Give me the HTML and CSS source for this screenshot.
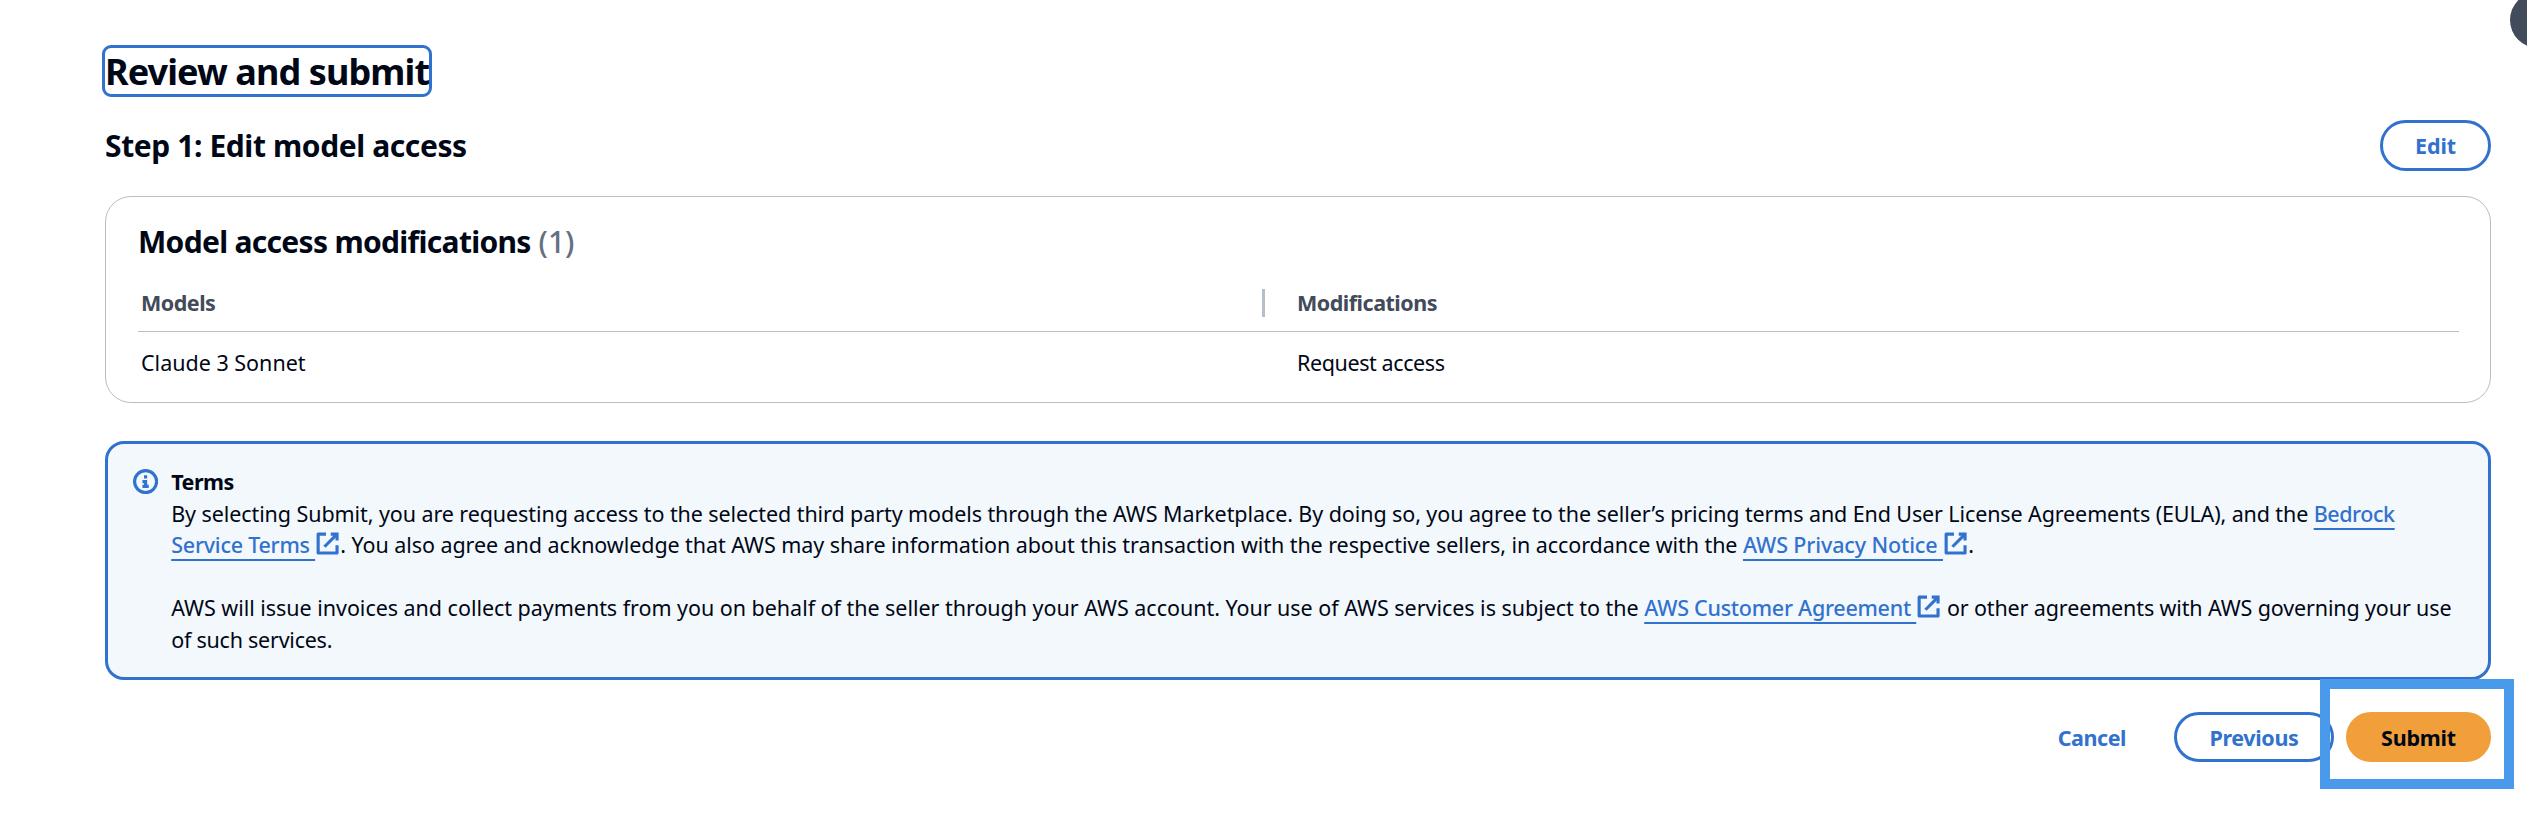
FILE: index.html
```html
<!DOCTYPE html>
<html lang="en">
<head>
<meta charset="utf-8">
<title>Review and submit</title>
<link rel="stylesheet" href="styles.css">
</head>
<body>
<svg class="sprite" aria-hidden="true">
  <symbol id="external" viewBox="0 0 16 16">
    <path d="M10 2h4v4" /><path d="m6 10 8-8" /><path d="M14 9.048V14H2V2h5" stroke-linejoin="round" />
  </symbol>
</svg>
<div class="help-toggle"></div>
<main class="page">
  <h1 class="title">Review and submit</h1>
  <section class="step-header">
    <h2 class="step-title">Step 1: Edit model access</h2>
    <button class="btn btn-edit">Edit</button>
  </section>
  <section class="card">
    <h2 class="card-title"><span class="card-name">Model access modifications</span> <span class="count">(1)</span></h2>
    <div class="table">
      <div class="row head">
        <div class="cell first models">Models</div>
        <div class="cell mods">Modifications</div>
      </div>
      <div class="row">
        <div class="cell">Claude 3 Sonnet</div>
        <div class="cell request">Request access</div>
      </div>
    </div>
  </section>
  <section class="alert">
    <svg class="info" viewBox="0 0 16 16"><circle cx="8" cy="8" r="7" /><path d="M8 11V8H6M10 11H6M8 6V4" /></svg>
    <div class="alert-body">
      <div class="line terms">Terms</div>
      <div class="line"><span class="t1">By selecting Submit, you are requesting access to the selected third party models through the AWS Marketplace. By doing so, you agree to the seller’s </span><span class="t2">pricing terms and End User License Agreements (EULA), and the </span><a class="link l1">Bedrock</a></div>
      <div class="line"><a class="link l2">Service Terms </a><svg class="ext"><use href="#external" /></svg><span class="t3">. You also agree and acknowledge that AWS may share information about this transaction with the respective sellers, in accordance with the </span><a class="link l3">AWS Privacy Notice </a><svg class="ext"><use href="#external" /></svg>.</div>
      <div class="line"></div>
      <div class="line"><span class="t4">AWS will issue invoices and collect payments from you on behalf of the seller through your AWS account. Your use of AWS services is subject to the </span><a class="link l4">AWS Customer Agreement </a><svg class="ext"><use href="#external" /></svg><span class="t5"> or other agreements with AWS governing your use</span></div>
      <div class="line t6">of such services.</div>
    </div>
  </section>
  <footer class="actions">
    <button class="btn btn-cancel">Cancel</button>
    <button class="btn btn-previous">Previous</button>
    <div class="submit-wrap">
      <button class="btn btn-submit">Submit</button>
      <div class="highlight"></div>
    </div>
  </footer>
</main>
</body>
</html>
```
FILE: styles.css
```css
* { box-sizing: border-box; }
body {
  margin: 0;
  height: 818px;
  position: relative;
  overflow: hidden;
  background: #fff;
  color: #000716;
  font: 400 21.5px/31.5px "Noto Sans", "Open Sans", sans-serif;
}
h1, h2 { margin: 0; font-weight: 700; }
.sprite { position: absolute; width: 0; height: 0; }
.help-toggle {
  position: absolute;
  top: -8px;
  right: -39px;
  width: 56px;
  height: 56px;
  border-radius: 50%;
  background: #424b5a;
}
.page {
  display: flex;
  flex-direction: column;
  padding: 45px 36px 0 105px;
}
.title {
  align-self: flex-start;
  width: 330px;
  height: 52px;
  margin-left: -3px;
  border: 3px solid #3272cf;
  border-radius: 9px;
  font-size: 36px;
  line-height: 47px;
  letter-spacing: -0.9px;
  white-space: nowrap;
}
.step-header {
  display: flex;
  justify-content: space-between;
  align-items: center;
  height: 51px;
  margin-top: 23px;
}
.step-title { font-size: 30px; line-height: 36px; letter-spacing: -0.4px; }
.btn {
  height: 50px;
  padding: 0;
  border: 3px solid #3272cf;
  border-radius: 25px;
  background: #fff;
  color: #3272cf;
  font: 700 21.5px/44px "Noto Sans", "Open Sans", sans-serif;
}
.btn-edit { width: 111px; height: 51px; border-radius: 25.5px; letter-spacing: -0.1px; }
.card {
  height: 207px;
  margin-top: 25px;
  padding: 27px 31px 0 32px;
  border: 1px solid #b6bec9;
  border-radius: 26px;
}
.card-title { font-size: 30px; line-height: 36px; white-space: nowrap; }
.card-name { letter-spacing: -0.69px; }
.count { font-weight: 500; color: #656f7f; }
.table { margin-top: 14px; }
.row {
  display: grid;
  grid-template-columns: 1127px 1fr;
  align-items: center;
  height: 61px;
}
.head {
  height: 58px;
  border-bottom: 1px solid #b6bec9;
  color: #424b5a;
  font-weight: 700;
}
.cell { display: flex; align-items: center; padding-left: 3px; }
.cell + .cell { padding-left: 32px; }
.first { height: 28px; border-right: 3px solid #b6bec9; }
.models { letter-spacing: -0.5px; }
.mods { letter-spacing: -0.49px; }
.request { letter-spacing: -0.4px; }
.alert {
  display: flex;
  gap: 13px;
  height: 239px;
  margin-top: 38px;
  padding: 22px 25px;
  border: 3px solid #3272cf;
  border-radius: 19px;
  background: #f3f8fc;
}
.info {
  flex: none;
  width: 25.2px;
  height: 25.2px;
  margin-top: 3px;
  fill: none;
  stroke: #3272cf;
  stroke-width: 2;
}
.line { height: 31.5px; white-space: pre; }
.terms { font-weight: 700; letter-spacing: -0.5px; }
.link {
  color: #3272cf;
  font-weight: 500;
  text-decoration: underline 2px;
  text-underline-offset: 5.5px;
  text-decoration-skip-ink: none;
}
.ext {
  width: 25.2px;
  height: 25.2px;
  vertical-align: -3.5px;
  fill: none;
  stroke: #3272cf;
  stroke-width: 2;
}
.t1 { letter-spacing: -0.082px; }
.t2 { letter-spacing: -0.112px; }
.t3 { letter-spacing: -0.069px; }
.t4 { letter-spacing: -0.033px; }
.t5 { letter-spacing: -0.132px; }
.t6 { letter-spacing: -0.239px; }
.l1 { letter-spacing: -0.444px; }
.l2 { letter-spacing: -0.237px; }
.l3 { letter-spacing: -0.124px; }
.l4 { letter-spacing: -0.26px; }
.actions {
  display: flex;
  justify-content: flex-end;
  margin-top: 32px;
}
.actions .btn { padding-top: 1px; }
.btn-cancel {
  margin-right: 45px;
  border-color: transparent;
  background: none;
  letter-spacing: -0.45px;
}
.btn-previous { width: 160px; margin-right: 12px; letter-spacing: -0.36px; }
.submit-wrap { position: relative; display: flex; }
.btn-submit {
  width: 145px;
  border-color: #f09f3a;
  background: #f09f3a;
  color: #000716;
  letter-spacing: -0.19px;
}
.highlight {
  position: absolute;
  top: -33px;
  left: -26px;
  width: 194px;
  height: 110px;
  border: 10px solid #4a9aec;
}
```
